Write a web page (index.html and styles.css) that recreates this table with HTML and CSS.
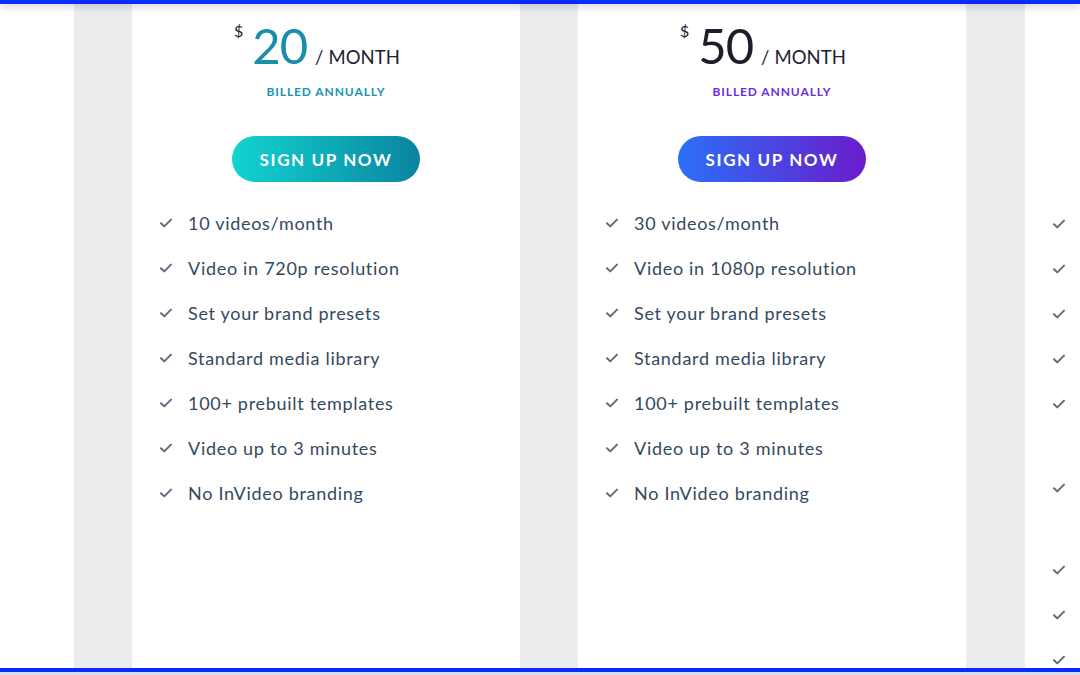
FILE: index.html
```html
<!DOCTYPE html>
<html lang="en">
<head>
<meta charset="utf-8">
<title>Pricing</title>
<link rel="stylesheet" href="styles.css">
</head>
<body>
<div class="topbar"></div>
<main class="page">
  <section class="col">
    <div class="gutter"></div>
    <div class="card">
      <div class="price">
        <span class="cur">$</span>
        <span class="amt teal">20</span>
        <span class="per">/ MONTH</span>
      </div>
      <div class="billed teal-b">BILLED ANNUALLY</div>
      <a class="btn btn-teal" href="#">SIGN UP NOW</a>
      <ul class="features">
        <li><svg class="chk" viewBox="0 0 12 10"><polyline points="1,5.2 4.3,8.4 11,1.6"/></svg><span>10 videos/month</span></li>
        <li><svg class="chk" viewBox="0 0 12 10"><polyline points="1,5.2 4.3,8.4 11,1.6"/></svg><span>Video in 720p resolution</span></li>
        <li><svg class="chk" viewBox="0 0 12 10"><polyline points="1,5.2 4.3,8.4 11,1.6"/></svg><span>Set your brand presets</span></li>
        <li><svg class="chk" viewBox="0 0 12 10"><polyline points="1,5.2 4.3,8.4 11,1.6"/></svg><span>Standard media library</span></li>
        <li><svg class="chk" viewBox="0 0 12 10"><polyline points="1,5.2 4.3,8.4 11,1.6"/></svg><span>100+ prebuilt templates</span></li>
        <li><svg class="chk" viewBox="0 0 12 10"><polyline points="1,5.2 4.3,8.4 11,1.6"/></svg><span>Video up to 3 minutes</span></li>
        <li><svg class="chk" viewBox="0 0 12 10"><polyline points="1,5.2 4.3,8.4 11,1.6"/></svg><span>No InVideo branding</span></li>
      </ul>
    </div>
  </section>
  <section class="col">
    <div class="gutter"></div>
    <div class="card">
      <div class="price">
        <span class="cur">$</span>
        <span class="amt dark">50</span>
        <span class="per">/ MONTH</span>
      </div>
      <div class="billed purple-b">BILLED ANNUALLY</div>
      <a class="btn btn-purple" href="#">SIGN UP NOW</a>
      <ul class="features">
        <li><svg class="chk" viewBox="0 0 12 10"><polyline points="1,5.2 4.3,8.4 11,1.6"/></svg><span>30 videos/month</span></li>
        <li><svg class="chk" viewBox="0 0 12 10"><polyline points="1,5.2 4.3,8.4 11,1.6"/></svg><span>Video in 1080p resolution</span></li>
        <li><svg class="chk" viewBox="0 0 12 10"><polyline points="1,5.2 4.3,8.4 11,1.6"/></svg><span>Set your brand presets</span></li>
        <li><svg class="chk" viewBox="0 0 12 10"><polyline points="1,5.2 4.3,8.4 11,1.6"/></svg><span>Standard media library</span></li>
        <li><svg class="chk" viewBox="0 0 12 10"><polyline points="1,5.2 4.3,8.4 11,1.6"/></svg><span>100+ prebuilt templates</span></li>
        <li><svg class="chk" viewBox="0 0 12 10"><polyline points="1,5.2 4.3,8.4 11,1.6"/></svg><span>Video up to 3 minutes</span></li>
        <li><svg class="chk" viewBox="0 0 12 10"><polyline points="1,5.2 4.3,8.4 11,1.6"/></svg><span>No InVideo branding</span></li>
      </ul>
    </div>
  </section>
  <section class="col col-last">
    <div class="gutter"></div>
    <div class="card card-last">
      <ul class="features features-solo">
        <li><svg class="chk" viewBox="0 0 12 10"><polyline points="1,5.2 4.3,8.4 11,1.6"/></svg></li>
        <li><svg class="chk" viewBox="0 0 12 10"><polyline points="1,5.2 4.3,8.4 11,1.6"/></svg></li>
        <li><svg class="chk" viewBox="0 0 12 10"><polyline points="1,5.2 4.3,8.4 11,1.6"/></svg></li>
        <li><svg class="chk" viewBox="0 0 12 10"><polyline points="1,5.2 4.3,8.4 11,1.6"/></svg></li>
        <li class="tall"><svg class="chk" viewBox="0 0 12 10"><polyline points="1,5.2 4.3,8.4 11,1.6"/></svg></li>
        <li class="tall2"><svg class="chk" viewBox="0 0 12 10"><polyline points="1,5.2 4.3,8.4 11,1.6"/></svg></li>
        <li><svg class="chk" viewBox="0 0 12 10"><polyline points="1,5.2 4.3,8.4 11,1.6"/></svg></li>
        <li><svg class="chk" viewBox="0 0 12 10"><polyline points="1,5.2 4.3,8.4 11,1.6"/></svg></li>
        <li><svg class="chk" viewBox="0 0 12 10"><polyline points="1,5.2 4.3,8.4 11,1.6"/></svg></li>
      </ul>
    </div>
  </section>
</main>
<div class="bottombar"></div>
</body>
</html>
```
FILE: styles.css
```css
html, body {
  margin: 0;
  padding: 0;
  width: 1080px;
  height: 675px;
  overflow: hidden;
  background: #ffffff;
  font-family: Lato, "Open Sans", Arial, sans-serif;
}

.page {
  display: flex;
  padding-left: 74px;
  height: 675px;
}

.col {
  display: flex;
  flex-shrink: 0;
}

.col-last {
  flex-shrink: 1;
  flex-grow: 1;
}

.gutter {
  width: 58px;
  background: #ebeced;
  flex-shrink: 0;
}

.col-last .gutter {
  width: 59px;
}

.card {
  width: 388px;
  flex-shrink: 0;
  background: #ffffff;
  display: flex;
  flex-direction: column;
  align-items: center;
  padding-top: 20px;
  box-sizing: border-box;
}

.card-last {
  width: auto;
  flex: 1;
  padding-top: 0;
}

.price {
  display: flex;
  align-items: baseline;
  padding-right: 18px;
  color: #1d2030;
}

.cur {
  align-self: flex-start;
  font-size: 16px;
  line-height: 16px;
  margin-top: 3px;
  margin-right: 9px;
}

.amt {
  font-size: 49px;
  line-height: 50px;
  font-weight: 400;
  letter-spacing: -1px;
  margin-right: 8px;
}

.teal { color: #1a8dab; }
.dark { color: #1c1f2b; }

.per {
  font-size: 18.5px;
  letter-spacing: 0.1px;
}

.billed {
  margin-top: 15px;
  font-size: 12px;
  line-height: 14px;
  font-weight: 700;
  letter-spacing: 0.9px;
}

.teal-b { color: #1b94b3; }
.purple-b { color: #6b2ee4; }

.btn {
  margin-top: 37px;
  width: 188px;
  height: 46px;
  border-radius: 23px;
  display: flex;
  align-items: center;
  justify-content: center;
  color: #ffffff;
  text-decoration: none;
  font-size: 17px;
  font-weight: 700;
  letter-spacing: 1.6px;
}

.btn-teal {
  background: linear-gradient(90deg, #12d4d0 0%, #0a84a0 100%);
}

.btn-purple {
  background: linear-gradient(90deg, #2a70f8 0%, #6a1ccb 100%);
}

.features {
  list-style: none;
  margin: 18px 0 0 0;
  padding: 0 0 0 28px;
  align-self: stretch;
}

.features-solo {
  margin-top: 201px;
}

.features li {
  display: flex;
  align-items: center;
  height: 45px;
  font-size: 18px;
  letter-spacing: 0.7px;
  color: #35495e;
  white-space: nowrap;
}

.features li.tall {
  height: 84px;
  align-items: flex-start;
  padding-top: 18px;
  box-sizing: border-box;
}

.features li.tall2 {
  height: 82px;
  align-items: flex-start;
  padding-top: 18px;
  box-sizing: border-box;
}

.chk {
  width: 12px;
  height: 10px;
  margin-right: 16px;
  flex-shrink: 0;
  fill: none;
  stroke: #5d6d7e;
  stroke-width: 2;
  stroke-linecap: round;
  stroke-linejoin: round;
}

.topbar {
  position: fixed;
  top: 0;
  left: 0;
  right: 0;
  height: 4px;
  background: #0a2bff;
  box-shadow: 0 3px 6px rgba(0, 0, 0, 0.22);
  z-index: 5;
}

.bottombar {
  position: fixed;
  left: 0;
  right: 0;
  bottom: 0;
  height: 3px;
  border-top: 4px solid #0a2bff;
  background: #d8dcf2;
  z-index: 5;
}
```
